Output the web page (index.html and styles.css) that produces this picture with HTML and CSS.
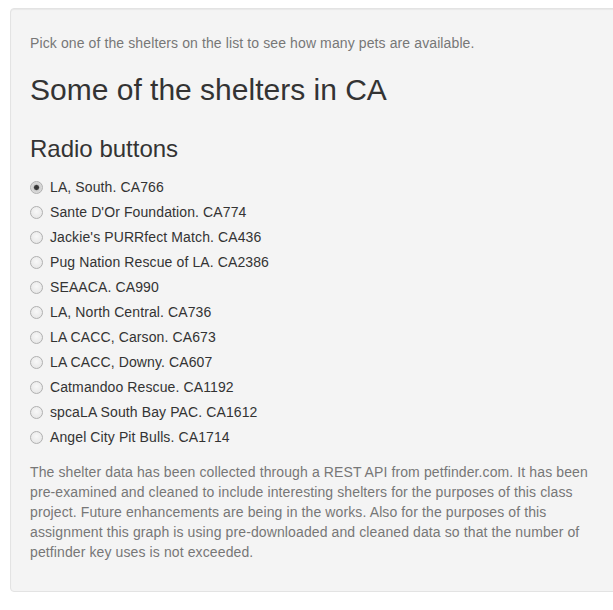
FILE: index.html
```html
<!DOCTYPE html>
<html>
<head>
<meta charset="utf-8">
<link rel="stylesheet" href="styles.css">
</head>
<body>
<div class="well">
  <p class="intro">Pick one of the shelters on the list to see how many pets are available.</p>
  <h2 class="title">Some of the shelters in CA</h2>
  <div class="form-group">
    <h3 class="group-label">Radio buttons</h3>
    <div class="radios">
      <label class="radio"><input type="radio" name="shelter" checked><span>LA, South. CA766</span></label>
      <label class="radio"><input type="radio" name="shelter"><span>Sante D'Or Foundation. CA774</span></label>
      <label class="radio"><input type="radio" name="shelter"><span>Jackie's PURRfect Match. CA436</span></label>
      <label class="radio"><input type="radio" name="shelter"><span>Pug Nation Rescue of LA. CA2386</span></label>
      <label class="radio"><input type="radio" name="shelter"><span>SEAACA. CA990</span></label>
      <label class="radio"><input type="radio" name="shelter"><span>LA, North Central. CA736</span></label>
      <label class="radio"><input type="radio" name="shelter"><span>LA CACC, Carson. CA673</span></label>
      <label class="radio"><input type="radio" name="shelter"><span>LA CACC, Downy. CA607</span></label>
      <label class="radio"><input type="radio" name="shelter"><span>Catmandoo Rescue. CA1192</span></label>
      <label class="radio"><input type="radio" name="shelter"><span>spcaLA South Bay PAC. CA1612</span></label>
      <label class="radio"><input type="radio" name="shelter"><span>Angel City Pit Bulls. CA1714</span></label>
    </div>
  </div>
  <p class="note">The shelter data has been collected through a REST API from petfinder.com. It has been pre&#8209;examined and cleaned to include interesting shelters for the purposes of this class project. Future enhancements are being in the works. Also for the purposes of this assignment this graph is using pre&#8209;downloaded and cleaned data so that the number of petfinder key uses is not exceeded.</p>
</div>
</body>
</html>
```
FILE: styles.css
```css
html, body {
  margin: 0;
  padding: 0;
  background: #fff;
  overflow: hidden;
}
body {
  padding: 8px 0 0 10px;
  font-family: "Liberation Sans", Arial, sans-serif;
  font-size: 14px;
  line-height: 20px;
  color: #333;
  letter-spacing: 0.11px;
}
.well {
  box-sizing: border-box;
  width: 620px;
  padding: 24px 19px 19px 19px;
  background: #f4f4f4;
  border: 1px solid #e3e3e3;
  border-radius: 4px;
  box-shadow: inset 0 1px 1px rgba(0,0,0,0.05);
}
.intro {
  margin: 0 0 10px;
  color: #777;
}
.title {
  margin: 20px 0 10px;
  font-size: 30px;
  font-weight: 500;
  line-height: 33px;
  letter-spacing: 0;
}
.group-label {
  margin: 30px 0 10px;
  font-size: 24px;
  font-weight: 500;
  line-height: 26px;
  letter-spacing: 0;
}
.radios {
  display: flex;
  flex-direction: column;
  gap: 5px;
  padding-top: 5px;
}
.radio {
  display: flex;
  align-items: center;
  min-height: 20px;
  line-height: 20px;
  cursor: pointer;
}
.radio input {
  -webkit-appearance: none;
  appearance: none;
  box-sizing: border-box;
  width: 13px;
  height: 13px;
  margin: 0 7px 0 0;
  border: 1px solid #b0b0b0;
  border-radius: 50%;
  background: radial-gradient(circle at 50% 40%, #f8f8f8 0%, #e2e2e2 100%);
  flex: none;
}
.radio input:checked {
  background: radial-gradient(circle, #333 0, #3a3a3a 2px, #cfcfcf 3.2px, #e9e9e9 100%);
}
.note {
  margin: 15px 0 10px;
  color: #777;
}
```
